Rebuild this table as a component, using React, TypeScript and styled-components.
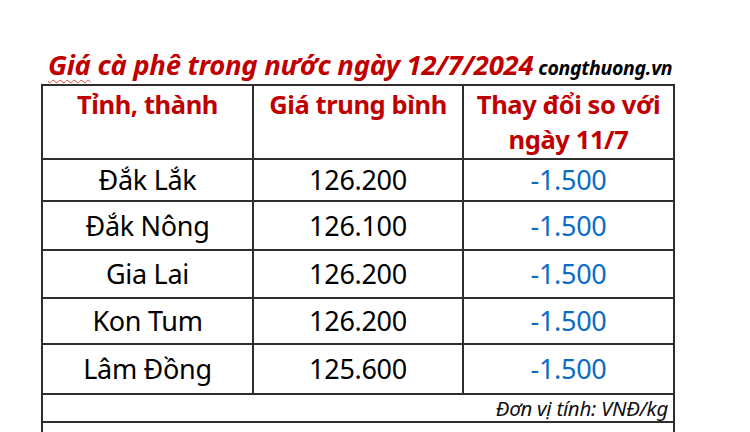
import styled, { createGlobalStyle } from 'styled-components';

const GlobalStyle = createGlobalStyle`
    html, body {
        margin: 0;
        padding: 0;
        background: #ffffff;
        font-family: 'Noto Sans', 'Open Sans', sans-serif;
    }
`;

const Page = styled.div`
    width: 750px;
    height: 432px;
    overflow: hidden;
    padding: 44px 0 0 41px;
    box-sizing: border-box;
`;

const TitleRow = styled.div`
    display: flex;
    align-items: baseline;
    gap: 5px;
    padding-left: 7px;
    height: 40px;
    line-height: 42px;
`;

const Title = styled.h1`
    margin: 0;
    color: #c00000;
    font-size: 27.5px;
    font-weight: 700;
    font-style: italic;
    letter-spacing: -0.3px;
`;

const Squiggle = styled.span`
    text-decoration: underline wavy #e0403a;
    text-decoration-thickness: 1px;
    text-underline-offset: 4px;
`;

const Source = styled.span`
    color: #000000;
    font-size: 19.5px;
    font-weight: 700;
    font-style: italic;
    letter-spacing: -0.3px;
`;

const Table = styled.table`
    border-collapse: collapse;
    table-layout: fixed;
    width: 632px;
`;

const Cell = styled.td<{ $head?: boolean; $blue?: boolean; $h?: number }>`
    border: 2px solid #2e2e2e;
    padding: 0;
    text-align: center;
    height: ${(p) => p.$h ?? 45}px;
    vertical-align: ${(p) => (p.$head ? 'top' : 'middle')};
    color: ${(p) => (p.$head ? '#c00000' : p.$blue ? '#0a6cc4' : '#000000')};
    font-size: ${(p) => (p.$head ? 25.5 : 27)}px;
    font-weight: ${(p) => (p.$head ? 700 : 400)};
    line-height: ${(p) => (p.$head ? '35px' : '30px')};
    letter-spacing: ${(p) => (p.$head ? '-0.4px' : '-0.3px')};
    padding-top: ${(p) => (p.$head ? 1 : 0)}px;
`;

const NoteCell = styled.td`
    border: 2px solid #2e2e2e;
    height: 26px;
    padding: 0 5px 0 0;
    text-align: right;
    vertical-align: middle;
    font-size: 20.5px;
    line-height: 24px;
    font-style: italic;
    letter-spacing: -0.3px;
    color: #111111;
`;

const EmptyCell = styled.td`
    border: 2px solid #2e2e2e;
    height: 30px;
`;

const rows = [
    { name: 'Đắk Lắk', price: '126.200', change: '-1.500', h: 40 },
    { name: 'Đắk Nông', price: '126.100', change: '-1.500', h: 47 },
    { name: 'Gia Lai', price: '126.200', change: '-1.500', h: 46 },
    { name: 'Kon Tum', price: '126.200', change: '-1.500', h: 44 },
    { name: 'Lâm Đồng', price: '125.600', change: '-1.500', h: 48 },
];

export default function App() {
    return (
        <>
            <GlobalStyle />
            <Page>
                <TitleRow>
                    <Title>
                        <Squiggle>Giá</Squiggle> cà phê trong nước ngày 12/7/2024
                    </Title>
                    <Source>congthuong.vn</Source>
                </TitleRow>
                <Table>
                    <colgroup>
                        <col style={{ width: 211 }} />
                        <col style={{ width: 210 }} />
                        <col style={{ width: 211 }} />
                    </colgroup>
                    <tbody>
                        <tr>
                            <Cell $head $h={71}>Tỉnh, thành</Cell>
                            <Cell $head $h={71}>Giá trung bình</Cell>
                            <Cell $head $h={71}>
                                Thay đổi so với
                                <br />
                                ngày 11/7
                            </Cell>
                        </tr>
                        {rows.map((r) => (
                            <tr key={r.name}>
                                <Cell $h={r.h}>{r.name}</Cell>
                                <Cell $h={r.h}>{r.price}</Cell>
                                <Cell $h={r.h} $blue>
                                    {r.change}
                                </Cell>
                            </tr>
                        ))}
                        <tr>
                            <NoteCell colSpan={3}>Đơn vị tính: VNĐ/kg</NoteCell>
                        </tr>
                        <tr>
                            <EmptyCell colSpan={3} />
                        </tr>
                    </tbody>
                </Table>
            </Page>
        </>
    );
}
